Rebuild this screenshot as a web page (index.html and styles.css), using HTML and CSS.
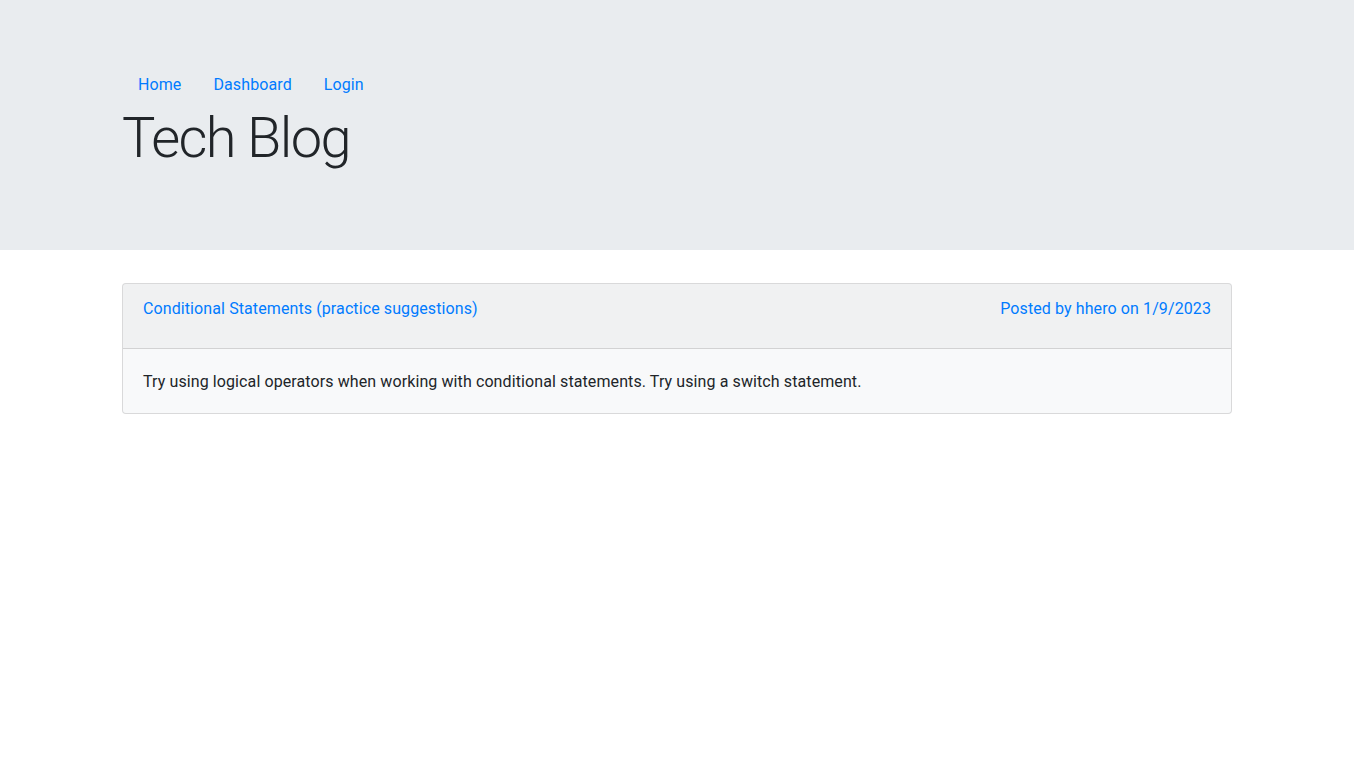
FILE: index.html
```html
<!DOCTYPE html>
<html lang="en">
<head>
<meta charset="utf-8">
<title>Tech Blog</title>
<link rel="stylesheet" href="styles.css">
</head>
<body>
<header class="jumbotron">
  <div class="container">
    <nav class="nav">
      <a class="nav-link" href="#">Home</a>
      <a class="nav-link" href="#">Dashboard</a>
      <a class="nav-link" href="#">Login</a>
    </nav>
    <h1 class="display">Tech Blog</h1>
  </div>
</header>
<main class="container">
  <article class="card">
    <div class="card-header">
      <a href="#" class="post-title">Conditional Statements (practice suggestions)</a>
      <span class="post-meta">Posted by hhero on 1/9/2023</span>
    </div>
    <div class="card-body">
      <p>Try using logical operators when working with conditional statements. Try using a switch statement.</p>
    </div>
  </article>
</main>
</body>
</html>
```
FILE: styles.css
```css
* { box-sizing: border-box; }
body {
  margin: 0;
  font-family: Roboto, "Noto Sans", "Liberation Sans", sans-serif;
  font-size: 16px;
  line-height: 1.5;
  letter-spacing: 0.1px;
  color: #212529;
  background: #fff;
}
a { color: #007bff; text-decoration: none; }
.container {
  max-width: 1140px;
  margin: 0 auto;
  padding: 0 15px;
}
.jumbotron {
  background: #e9ecef;
  height: 250px;
  padding-top: 65px;
  margin-bottom: 33px;
}
.nav { display: flex; }
.nav-link { padding: 8px 16px; }
.display {
  margin: 0;
  font-size: 56px;
  font-weight: 300;
  line-height: 1.2;
  letter-spacing: -1.6px;
}
.card {
  border: 1px solid rgba(0,0,0,.125);
  border-radius: 4px;
  background: #f8f9fa;
  overflow: hidden;
}
.card-header {
  display: flex;
  justify-content: space-between;
  padding: 13px 20px 27px;
  background: rgba(0,0,0,.03);
  border-bottom: 1px solid rgba(0,0,0,.125);
}
.post-meta { color: #007bff; }
.card-body { padding: 21px 20px 19px; }
.card-body p { margin: 0; }
```
